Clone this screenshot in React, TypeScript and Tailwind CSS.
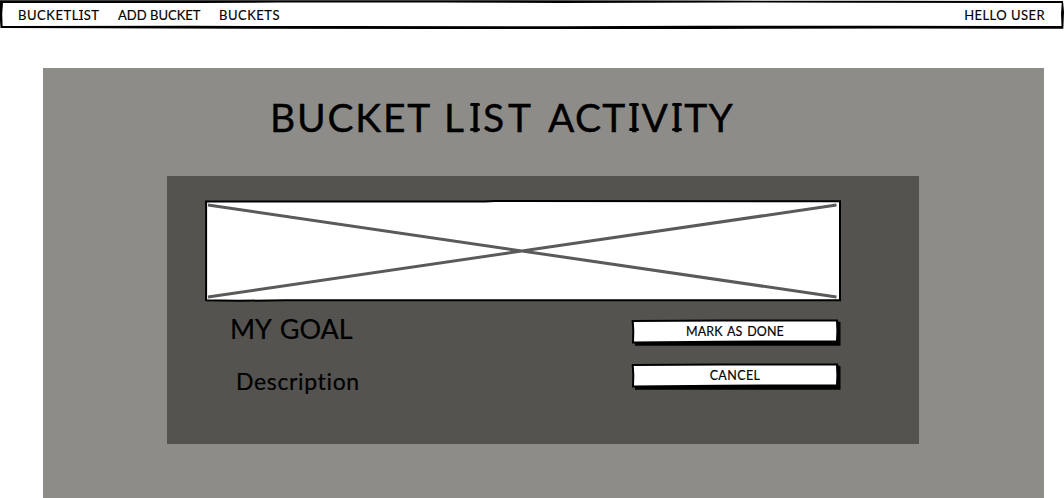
import type { ReactNode } from "react";

function SerifI({ large = false }: { large?: boolean }) {
  return (
    <span
      className={
        large
          ? "relative mx-[2px] inline-block tracking-normal before:absolute before:left-1/2 before:top-[10px] before:h-[3px] before:w-[10px] before:-translate-x-1/2 before:rounded-full before:bg-black after:absolute after:left-1/2 after:top-[35px] after:h-[3px] after:w-[10px] after:-translate-x-1/2 after:rounded-full after:bg-black"
          : "relative mx-[0.5px] inline-block tracking-normal before:absolute before:left-1/2 before:top-[4px] before:h-px before:w-[4px] before:-translate-x-1/2 before:bg-black after:absolute after:left-1/2 after:top-[13px] after:h-px after:w-[4px] after:-translate-x-1/2 after:bg-black"
      }
    >
      I
    </span>
  );
}

function NavBar() {
  return (
    <header className="relative h-7 w-full bg-white">
      <svg className="absolute inset-0 h-7 w-full overflow-visible" viewBox="0 0 1064 28" preserveAspectRatio="none" fill="black">
        <path
          fillRule="evenodd"
          d="M0 0.2L190 0.3L500 0.2L700 0.6L880 0.7L1063 1.1L1064 12L1063.3 28.8L900 28.5L700 29L430 29L250 28.8L100 28.2L0.5 28L0 20ZM3 3L2.2 14L2.6 26L190 25.7L250 26L345 26L560 26.2L700 25.7L860 25.8L1061.5 26L1061 14L1061.7 3L850 2.7L740 2.6L560 3L440 2.4L280 2.6L200 3Z"
        />
      </svg>
      <nav className="relative flex h-7 items-center pb-px pl-[18px] pr-[18px] pt-[2px] text-[13px] leading-[18px] [-webkit-text-stroke:0.15px_black]">
        <span className="w-[100px] tracking-[0.55px]">BUCKETL<SerifI />ST</span>
        <span className="w-[101px] tracking-[0.02px]">ADD BUCKET</span>
        <span className="tracking-[0.5px]">BUCKETS</span>
        <span className="ml-auto mr-px tracking-[0.45px]">HELLO USER</span>
      </nav>
    </header>
  );
}

function ImagePlaceholder() {
  return (
    <svg className="block h-[102px] w-[637px]" viewBox="0 0 637 102">
      <path d="M1.1 1.6L280 1.6L290 1.1L635 1.2L635 100.2L80 100.3L33 100.8L1.1 100.3Z" fill="white" stroke="black" strokeWidth="2" />
      <path d="M3 5L631.5 97M3 97L631.5 5" stroke="#5a5a5a" strokeWidth="3" fill="none" />
    </svg>
  );
}

function SketchButton({ children }: { children: ReactNode }) {
  return (
    <button type="button" className="relative h-[27px] w-[210px] text-[12.5px] leading-[18px] [-webkit-text-stroke:0.15px_black]">
      <svg className="absolute inset-0 h-[27px] w-[210px]" viewBox="0 0 210 27">
        <path d="M4 4L206 2.2L209.5 3L209.5 26.8L4 26.8Z" fill="black" />
        <path d="M1.7 1.9L90 1.5L206 1.6L206.4 12L206 22.3L90 22.8L2 23.6L2.3 12Z" fill="white" stroke="black" strokeWidth="2" />
      </svg>
      <span className="relative block pb-[2px] pr-[2px]">{children}</span>
    </button>
  );
}

export default function App() {
  return (
    <div className="h-[498px] w-full overflow-hidden bg-white font-['Lato',sans-serif] text-black [font-variant-ligatures:none]">
      <NavBar />
      <main className="ml-[43px] mt-10 flex h-[430px] w-[1001px] flex-col bg-[#8d8c89]">
        <h1 className="flex pl-[227px] pt-[25px] text-[39px] leading-[48px] [-webkit-text-stroke:0.4px_black]">
          <span className="w-[174px] tracking-[1.8px]">BUCKET</span>
          <span className="w-[104px] tracking-[4px]">L<SerifI large />ST</span>
          <span className="tracking-[1.3px]">ACT<SerifI large />V<SerifI large />TY</span>
        </h1>
        <section className="ml-[124px] mt-[35px] h-[268px] w-[752px] bg-[#545350] pl-[38px] pt-[24px]">
          <ImagePlaceholder />
          <div className="flex w-[636px] justify-between pt-[17px]">
            <div className="pl-[25px]">
              <h2 className="-mt-[6px] text-[27px] leading-8 [word-spacing:2px] [-webkit-text-stroke:0.2px_black]">MY GOAL</h2>
              <p className="pl-[6px] pt-[22px] text-[23px] leading-7 tracking-[0.65px] [-webkit-text-stroke:0.2px_black]">Description</p>
            </div>
            <div className="flex flex-col gap-[17px]">
              <SketchButton><span className="tracking-[0.1px] [word-spacing:1.5px]">MARK AS DONE</span></SketchButton>
              <SketchButton><span className="tracking-[0.4px]">CANCEL</span></SketchButton>
            </div>
          </div>
        </section>
      </main>
    </div>
  );
}
